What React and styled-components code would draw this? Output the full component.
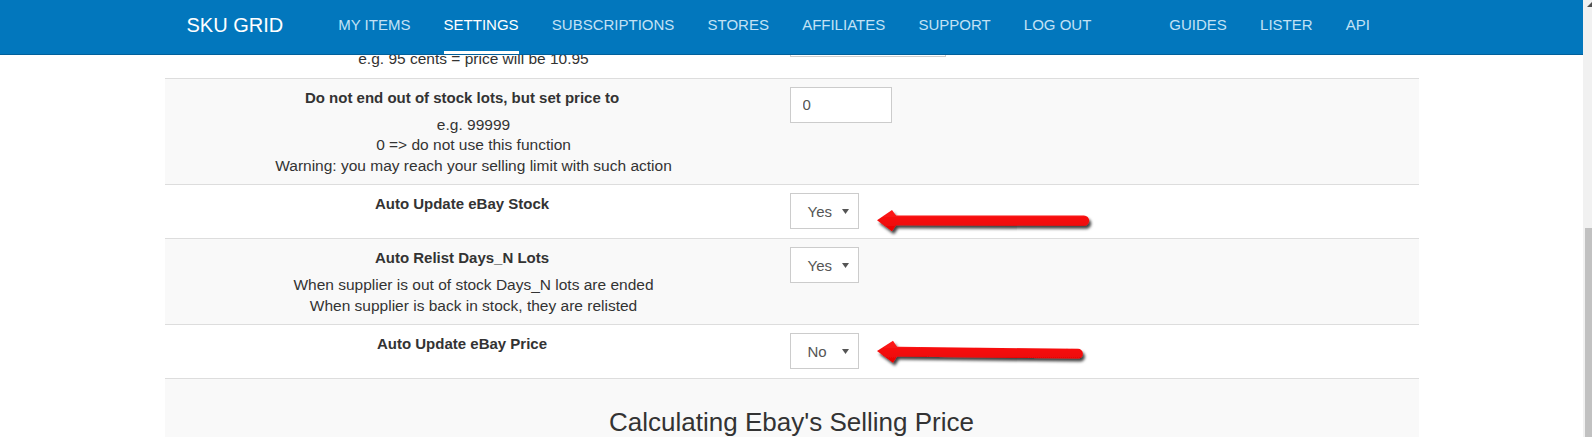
import React, { useId } from "react";
import styled, { createGlobalStyle } from "styled-components";

const Global = createGlobalStyle`
  html, body { margin: 0; padding: 0; }
  body {
    overflow: hidden;
    background: #fff;
    font-family: "Liberation Sans", Arial, Helvetica, sans-serif;
    color: #333;
  }
  * { box-sizing: border-box; }
`;

const Root = styled.div`
  display: flex;
  height: 437px;
  overflow: hidden;
`;

const Main = styled.div`
  flex: 1;
  position: relative;
  overflow: hidden;
  background: #fff;
`;

const Navbar = styled.nav`
  position: absolute;
  top: 0;
  left: 0;
  right: 0;
  height: 55px;
  background: #0277bd;
  border-bottom: 1px solid #01609b;
  z-index: 10;
`;

const NavInner = styled.div`
  width: 1254px;
  margin: 0 auto;
  display: flex;
  height: 54px;
`;

const Brand = styled.div`
  padding: 15px 0 0 22px;
  font-size: 20px;
  line-height: 20px;
  color: #fff;
  white-space: nowrap;
`;

const NavList = styled.div`
  display: flex;
  gap: 33.2px;
  margin-left: ${(p) => p.$offset}px;
`;

const NavLink = styled.a`
  display: block;
  height: 54px;
  padding-top: 15px;
  font-size: 15px;
  line-height: 20px;
  white-space: nowrap;
  text-decoration: none;
  color: ${(p) => (p.$active ? "#ffffff" : "#c3e2f5")};
  border-bottom: 3px solid ${(p) => (p.$active ? "#ffffff" : "transparent")};
`;

const Content = styled.div`
  padding-top: 12px;
`;

const Table = styled.div`
  width: 1254px;
  margin: 0 auto;
`;

const Row = styled.div`
  display: grid;
  grid-template-columns: 595px 1fr;
  background: ${(p) => (p.$striped ? "#f9f9f9" : "#ffffff")};
  border-top: 1px solid #dddddd;
`;

const LabelCell = styled.div`
  padding: 9px 8px 8px;
  text-align: center;
`;

const Title = styled.div`
  font-weight: bold;
  font-size: 15px;
  line-height: 20px;
  color: #333;
  visibility: ${(p) => (p.$hidden ? "hidden" : "visible")};
`;

const Desc = styled.div`
  margin-top: 7px;
  padding-left: 23px;
  font-size: 15.5px;
  line-height: 20.5px;
  color: #333;
`;

const ValueCell = styled.div`
  position: relative;
  padding: 8px 8px 9px 30px;
`;

const TextInput = styled.input`
  display: block;
  width: ${(p) => p.$w}px;
  height: 36px;
  border: 1px solid #cccccc;
  border-radius: 0;
  background: #fff;
  padding: 0 12px;
  font-family: "Liberation Sans", Arial, sans-serif;
  font-size: 15px;
  color: #555;
  outline: none;
`;

const SelectBox = styled.div`
  width: 69px;
  height: 36px;
  border: 1px solid #cccccc;
  background: #fff;
  display: flex;
  align-items: center;
  justify-content: space-between;
  padding: 0 9px 0 17px;
  font-size: 15px;
  color: #555;
`;

const SectionRow = styled.div`
  background: #f9f9f9;
  border-top: 1px solid #dddddd;
  padding: 9px 8px 20px;
  text-align: center;
`;

const SectionTitle = styled.h3`
  margin: 20px 0 0;
  font-size: 26px;
  line-height: 1.1;
  font-weight: normal;
  color: #333;
`;

const ArrowWrap = styled.svg`
  position: absolute;
  left: 110px;
  top: ${(p) => p.$top}px;
  overflow: visible;
  pointer-events: none;
`;

const ScrollTrack = styled.div`
  width: 9px;
  height: 437px;
  background: #f1f1f1;
  display: flex;
  flex-direction: column;
  align-items: flex-end;
  padding-top: 2px;
`;

const Thumb = styled.div`
  margin-top: auto;
  width: 7px;
  height: 209px;
  background: #c1c1c1;
`;

const Caret = () => (
  <svg width="7" height="5" viewBox="0 0 7 5">
    <polygon points="0,0 7,0 3.5,5" fill="#555" />
  </svg>
);

const Select = ({ value }) => (
  <SelectBox>
    <span>{value}</span>
    <Caret />
  </SelectBox>
);

const ARROWS = {
  a: "M7 15.3 L22 5 L26 10.6 L214 10.4 A5.2 5.2 0 0 1 214 20.8 L26 20.3 L22 26.3 Z",
  b: "M7 15 L23 4.8 L27 10.7 L208 12.8 A4.9 4.9 0 0 1 208 22.6 L27 20.4 L23 26.8 Z",
};

const RedArrow = ({ top, variant }) => {
  const id = useId().replace(/:/g, "");
  return (
    <ArrowWrap $top={top} width="225" height="34" viewBox="0 0 225 34">
      <defs>
        <filter id={`sh${id}`} x="-10%" y="-40%" width="125%" height="190%">
          <feDropShadow dx="2" dy="3" stdDeviation="1.4" floodColor="#000" floodOpacity="0.75" />
        </filter>
        <linearGradient id={`gr${id}`} x1="0" y1="0" x2="0" y2="1">
          <stop offset="0" stopColor="#ff1a1a" />
          <stop offset="1" stopColor="#e80000" />
        </linearGradient>
      </defs>
      <path d={ARROWS[variant]} fill={`url(#gr${id})`} filter={`url(#sh${id})`} />
    </ArrowWrap>
  );
};

const leftLinks = ["MY ITEMS", "SETTINGS", "SUBSCRIPTIONS", "STORES", "AFFILIATES", "SUPPORT", "LOG OUT"];
const rightLinks = ["GUIDES", "LISTER", "API"];

export default function App() {
  return (
    <>
      <Global />
      <Root>
        <Main>
          <Navbar>
            <NavInner>
              <Brand>SKU GRID</Brand>
              <NavList $offset={55}>
                {leftLinks.map((l) => (
                  <NavLink key={l} $active={l === "SETTINGS"}>{l}</NavLink>
                ))}
              </NavList>
              <NavList $offset={78}>
                {rightLinks.map((l) => (
                  <NavLink key={l}>{l}</NavLink>
                ))}
              </NavList>
            </NavInner>
          </Navbar>
          <Content>
            <Table>
              <Row>
                <LabelCell>
                  <Title $hidden aria-hidden="true">&nbsp;</Title>
                  <Desc>e.g. 95 cents = price will be 10.95</Desc>
                </LabelCell>
                <ValueCell>
                  <TextInput $w={156} readOnly value="" />
                </ValueCell>
              </Row>
              <Row $striped>
                <LabelCell>
                  <Title>Do not end out of stock lots, but set price to</Title>
                  <Desc>
                    e.g. 99999
                    <br />
                    0 =&gt; do not use this function
                    <br />
                    Warning: you may reach your selling limit with such action
                  </Desc>
                </LabelCell>
                <ValueCell>
                  <TextInput $w={102} readOnly value="0" />
                </ValueCell>
              </Row>
              <Row>
                <LabelCell>
                  <Title>Auto Update eBay Stock</Title>
                </LabelCell>
                <ValueCell>
                  <Select value="Yes" />
                  <RedArrow top={20} variant="a" />
                </ValueCell>
              </Row>
              <Row $striped>
                <LabelCell>
                  <Title>Auto Relist Days_N Lots</Title>
                  <Desc>
                    When supplier is out of stock Days_N lots are ended
                    <br />
                    When supplier is back in stock, they are relisted
                  </Desc>
                </LabelCell>
                <ValueCell>
                  <Select value="Yes" />
                </ValueCell>
              </Row>
              <Row>
                <LabelCell>
                  <Title>Auto Update eBay Price</Title>
                </LabelCell>
                <ValueCell>
                  <Select value="No" />
                  <RedArrow top={11} variant="b" />
                </ValueCell>
              </Row>
              <SectionRow>
                <SectionTitle>Calculating Ebay's Selling Price</SectionTitle>
              </SectionRow>
            </Table>
          </Content>
        </Main>
        <ScrollTrack>
          <svg width="5" height="5" viewBox="0 0 5 5">
            <polygon points="0,5 5,0 5,5" fill="#505050" />
          </svg>
          <Thumb />
        </ScrollTrack>
      </Root>
    </>
  );
}
